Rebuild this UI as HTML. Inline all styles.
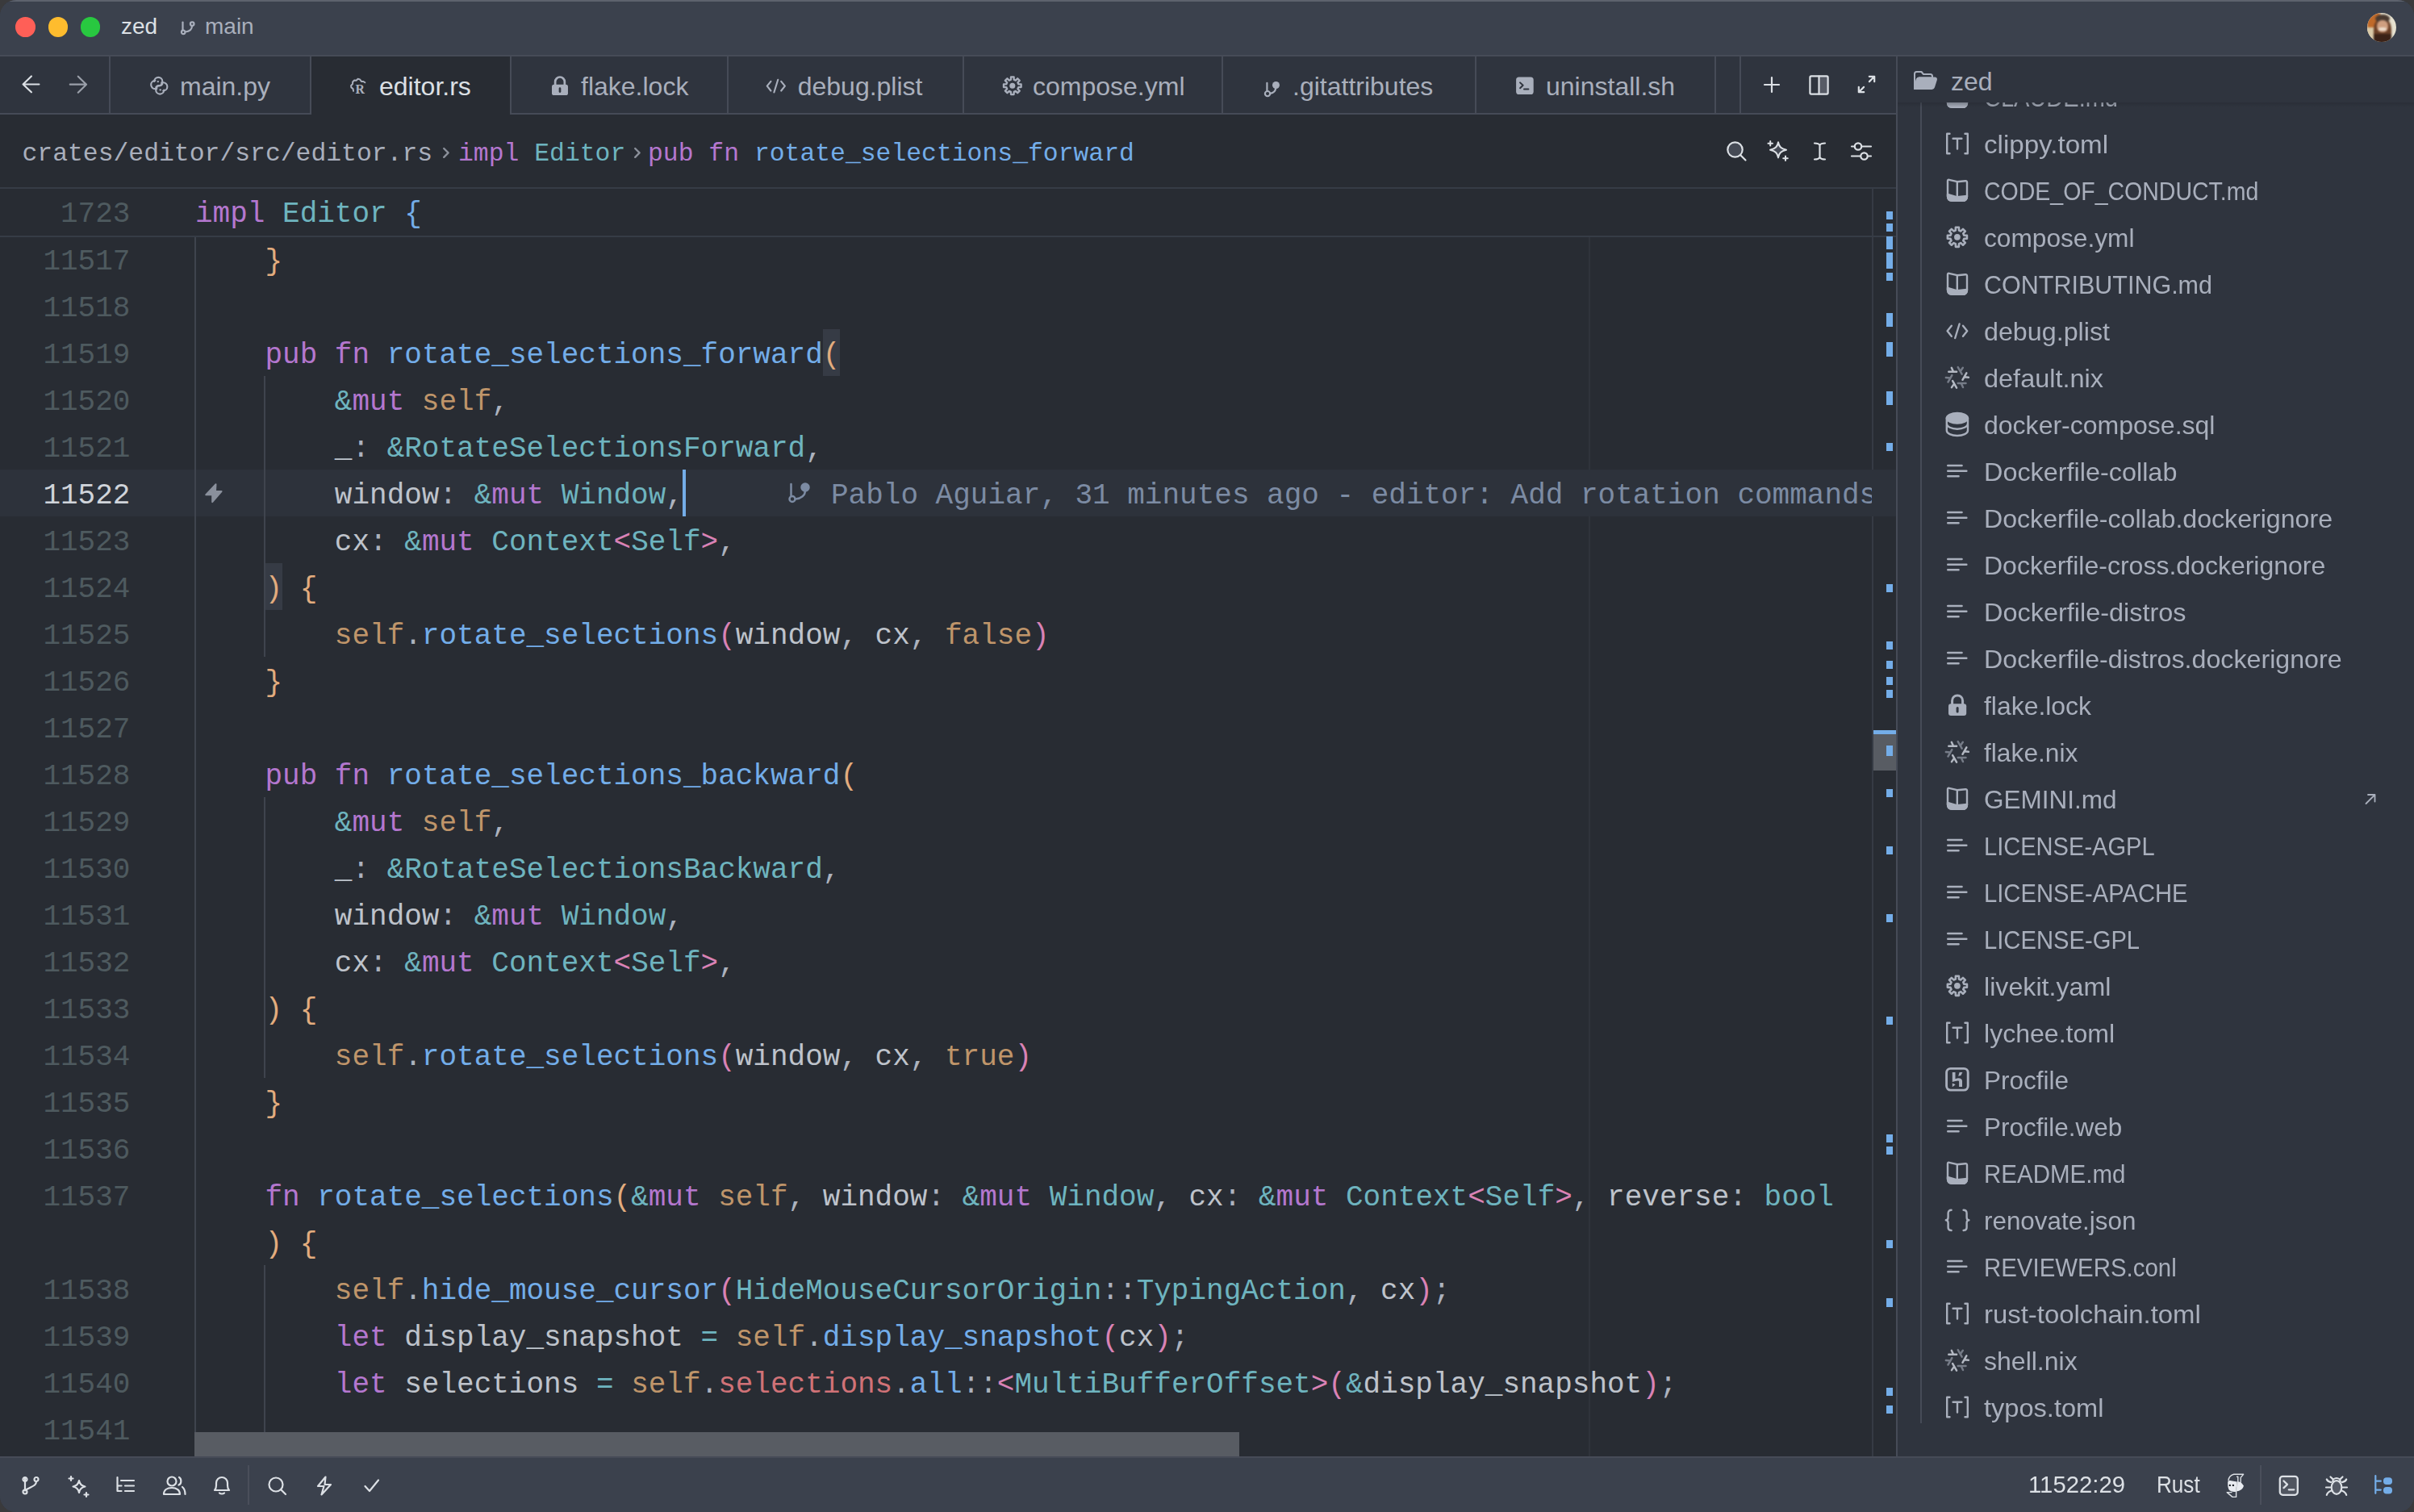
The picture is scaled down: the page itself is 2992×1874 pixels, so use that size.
<!DOCTYPE html><html><head><meta charset="utf-8"><style>
*{margin:0;padding:0;box-sizing:border-box}
html,body{width:2992px;height:1874px;overflow:hidden;background:#3a3a3c}
#win{position:absolute;left:0;top:0;width:2992px;height:1874px;border-radius:20px;overflow:hidden;background:#3b414d}
.a{position:absolute}
.ui{font-family:"Liberation Sans",sans-serif;white-space:pre}
.mono{font-family:"Liberation Mono",monospace;white-space:pre}
.code{font-family:"Liberation Mono",monospace;font-size:36px;line-height:58px;height:58px;white-space:pre;color:#bec3cb}
.k{color:#b477cf} .f{color:#73ade9} .t{color:#6eb4bf} .s{color:#bf956a} .p{color:#acb2be}
.v{color:#bec3cb} .r{color:#d07277} .o{color:#6eb4bf} .b0{color:#74ade8} .b1{color:#e2ac7e} .b2{color:#d982b5}
svg{position:absolute;overflow:visible}
</style></head><body><div id="win">
<div class="a" style="left:0px;top:0px;width:2992px;height:70px;background:#3b414d;"></div>
<div class="a" style="left:0px;top:0px;width:2992px;height:2px;background:#5d626d;"></div>
<div class="a" style="left:19.4px;top:21.4px;width:24.6px;height:24.6px;border-radius:50%;background:#ff5f57"></div>
<div class="a" style="left:59.5px;top:21.4px;width:24.6px;height:24.6px;border-radius:50%;background:#febc2e"></div>
<div class="a" style="left:99.7px;top:21.4px;width:24.6px;height:24.6px;border-radius:50%;background:#28c840"></div>
<div class="a ui" style="left:150px;top:16.30px;font-size:28px;line-height:34px;color:#dce0e5;">zed</div>
<svg style="left:224px;top:26px;width:18px;height:18px;stroke-width:2.2" viewBox="0 0 18 18" fill="none" stroke="#a9afbc" stroke-width="2" stroke-linecap="round" stroke-linejoin="round"><path d="M2.5 1.5v10.5"/><circle cx="3.2" cy="13.8" r="2.3"/><circle cx="14.2" cy="3.6" r="2.3"/><path d="M14 6c0 4-3 7-8.5 7.5"/></svg>
<div class="a ui" style="left:254px;top:16.30px;font-size:28px;line-height:34px;color:#a9afbc;">main</div>
<div class="a" style="left:2933.8px;top:15.6px;width:36.4px;height:36.4px;border-radius:50%;overflow:hidden;background:#e6e1cf"><div class="a" style="left:0;top:0;width:36.4px;height:36.4px;filter:blur(1.2px)"><div class="a" style="left:0;top:0;width:16px;height:20px;background:#c06a2a"></div><div class="a" style="left:-2px;top:18px;width:12px;height:16px;background:#d9c9a8"></div><div class="a" style="left:8px;top:6px;width:22px;height:34px;border-radius:45%;background:#6a3f26"></div><div class="a" style="left:10px;top:2px;width:18px;height:10px;border-radius:50%;background:#4a3a30"></div><div class="a" style="left:12px;top:9px;width:14px;height:15px;border-radius:45%;background:#cf9f80"></div><div class="a" style="left:14px;top:18px;width:10px;height:4px;border-radius:40%;background:#efe0d0"></div><div class="a" style="left:8px;top:26px;width:22px;height:12px;background:#3b2217"></div></div></div>
<div class="a" style="left:0px;top:68px;width:2992px;height:2px;background:#464b57;"></div>
<div class="a" style="left:0px;top:70px;width:2350px;height:72px;background:#2f343e;"></div>
<div class="a" style="left:0px;top:140px;width:2350px;height:2px;background:#464b57;"></div>
<div class="a" style="left:135px;top:70px;width:2px;height:70px;background:#464b57;"></div>
<div class="a" style="left:384px;top:70px;width:2px;height:70px;background:#464b57;"></div>
<div class="a" style="left:632px;top:70px;width:2px;height:70px;background:#464b57;"></div>
<div class="a" style="left:901px;top:70px;width:2px;height:70px;background:#464b57;"></div>
<div class="a" style="left:1193px;top:70px;width:2px;height:70px;background:#464b57;"></div>
<div class="a" style="left:1514px;top:70px;width:2px;height:70px;background:#464b57;"></div>
<div class="a" style="left:1828px;top:70px;width:2px;height:70px;background:#464b57;"></div>
<div class="a" style="left:2125px;top:70px;width:2px;height:70px;background:#464b57;"></div>
<div class="a" style="left:2156px;top:70px;width:2px;height:70px;background:#464b57;"></div>
<div class="a" style="left:386px;top:70px;width:246px;height:72px;background:#282c33;"></div>
<svg style="left:27px;top:93px;width:24px;height:24px;stroke-width:2.2" viewBox="0 0 24 24" fill="none" stroke="#dce0e5" stroke-width="2" stroke-linecap="round" stroke-linejoin="round"><path d="M21.4 11.5H1.6M11.9 1.5L1.6 11.5l10.3 9.8"/></svg>
<svg style="left:86px;top:93px;width:24px;height:24px;stroke-width:2.2" viewBox="0 0 24 24" fill="none" stroke="#9a9fa9" stroke-width="2" stroke-linecap="round" stroke-linejoin="round"><path d="M0.8 11.7H21M10.8 1.7L21 11.7l-10.2 10"/></svg>
<svg style="left:178.19px;top:91.58px;width:36.00px;height:36.00px;color:#a9afbc" viewBox="0 0 40 40" fill="none" stroke="#a9afbc" stroke-width="2.4" stroke-linecap="round" stroke-linejoin="round"><g transform="translate(9.4 3.8)"><path d="M16.5 6.1V8.5Q16.5 11.5 13 11.8H11.5Q8.7 12 8.6 15V16.4H6.5A5.7 5.7 0 0 1 6.5 5H5.3V6.1A5.6 5.6 0 0 1 16.5 6.1Z"/><path transform="rotate(180 12 12)" d="M16.5 6.1V8.5Q16.5 11.5 13 11.8H11.5Q8.7 12 8.6 15V16.4H6.5A5.7 5.7 0 0 1 6.5 5H5.3V6.1A5.6 5.6 0 0 1 16.5 6.1Z"/><circle cx="10.4" cy="6.3" r="1.3" fill="currentColor" stroke="none"/><circle cx="13.6" cy="17.7" r="1.3" fill="currentColor" stroke="none"/></g></svg>
<div class="a ui" style="left:223px;top:88.41px;font-size:32px;line-height:38px;color:#a9afbc;">main.py</div>
<svg style="left:424.59px;top:91.58px;width:36.00px;height:36.00px;color:#a9afbc" viewBox="0 0 40 40" fill="none" stroke="#a9afbc" stroke-width="2.4" stroke-linecap="round" stroke-linejoin="round"><g transform="translate(9.9 4.8)"><path d="M20.5 6.6L18.3 5.2L15.8 5.3L13.4 2.3L10.8 1.6L8.5 3.8L5.8 3.6L3.6 5.8L3.5 8.5L1.3 10.9L1.6 13.4L4 15.2L4.6 18.4" stroke-width="2.2"/><text x="7.2" y="21.7" font-family="Liberation Serif" font-weight="bold" font-size="17.5" fill="currentColor" stroke="none">R</text></g></svg>
<div class="a ui" style="left:470px;top:88.41px;font-size:32px;line-height:38px;color:#dce0e5;">editor.rs</div>
<svg style="left:675.39px;top:91.58px;width:36.00px;height:36.00px;color:#a9afbc" viewBox="0 0 40 40" fill="none" stroke="#a9afbc" stroke-width="2.4" stroke-linecap="round" stroke-linejoin="round"><rect x="10" y="14.2" width="22.2" height="14.8" rx="3" fill="currentColor" stroke="none"/><path d="M14.6 14.5V10.4A6.5 6.5 0 0 1 27.6 10.4V14.5" stroke-width="3"/><path d="M21.1 19.6V24" stroke="#2f343e" stroke-width="3"/></svg>
<div class="a ui" style="left:720px;top:88.41px;font-size:32px;line-height:38px;color:#a9afbc;">flake.lock</div>
<svg style="left:943.39px;top:91.58px;width:36.00px;height:36.00px;color:#a9afbc" viewBox="0 0 40 40" fill="none" stroke="#a9afbc" stroke-width="2.4" stroke-linecap="round" stroke-linejoin="round"><path d="M13.8 9.8L8.6 16.3L13.8 22.8M28 9.8L33.2 16.3L28 22.8M23.6 7.5L18.2 25"/></svg>
<div class="a ui" style="left:988.7px;top:88.41px;font-size:32px;line-height:38px;color:#a9afbc;">debug.plist</div>
<svg style="left:1236.19px;top:91.58px;width:36.00px;height:36.00px;color:#a9afbc" viewBox="0 0 40 40" fill="none" stroke="#a9afbc" stroke-width="2.4" stroke-linecap="round" stroke-linejoin="round"><path d="M18.90 3.77 L22.90 3.77 L22.98 7.46 L25.33 8.43 L27.99 5.87 L30.83 8.71 L28.27 11.37 L29.24 13.72 L32.93 13.80 L32.93 17.80 L29.24 17.88 L28.27 20.23 L30.83 22.89 L27.99 25.73 L25.33 23.17 L22.98 24.14 L22.90 27.83 L18.90 27.83 L18.82 24.14 L16.47 23.17 L13.81 25.73 L10.97 22.89 L13.53 20.23 L12.56 17.88 L8.87 17.80 L8.87 13.80 L12.56 13.72 L13.53 11.37 L10.97 8.71 L13.81 5.87 L16.47 8.43 L18.82 7.46Z" stroke-width="2.6"/><circle cx="20.9" cy="15.8" r="3.9" fill="currentColor" stroke="none"/></svg>
<div class="a ui" style="left:1280px;top:88.41px;font-size:32px;line-height:38px;color:#a9afbc;">compose.yml</div>
<svg style="left:1556.69px;top:91.58px;width:36.00px;height:36.00px;color:#a9afbc" viewBox="0 0 40 40" fill="none" stroke="#a9afbc" stroke-width="2.4" stroke-linecap="round" stroke-linejoin="round"><path d="M14.9 12V22.6"/><circle cx="15.6" cy="26.8" r="3.5"/><circle cx="27.2" cy="15" r="5" fill="currentColor" stroke="none"/><path d="M27 18.5Q26.5 25.5 19.3 26.6"/></svg>
<div class="a ui" style="left:1602px;top:88.41px;font-size:32px;line-height:38px;color:#a9afbc;">.gitattributes</div>
<svg style="left:1871.19px;top:91.58px;width:36.00px;height:36.00px;color:#a9afbc" viewBox="0 0 40 40" fill="none" stroke="#a9afbc" stroke-width="2.4" stroke-linecap="round" stroke-linejoin="round"><rect x="9" y="3.8" width="24" height="24" rx="4" fill="currentColor" stroke="none"/><path d="M14.5 11.5L18.5 15.3L14.5 19.1M20 20.6H26" stroke="#2f343e" stroke-width="2.2"/></svg>
<div class="a ui" style="left:1916px;top:88.41px;font-size:32px;line-height:38px;color:#a9afbc;">uninstall.sh</div>
<svg style="left:2185px;top:94px;width:22px;height:22px;stroke-width:2.2" viewBox="0 0 22 22" fill="none" stroke="#dce0e5" stroke-width="2" stroke-linecap="round" stroke-linejoin="round"><path d="M11 2v18M2 11h18"/></svg>
<svg style="left:2242px;top:93px;width:25px;height:25px;stroke-width:2.2" viewBox="0 0 25 25" fill="none" stroke="#dce0e5" stroke-width="2" stroke-linecap="round" stroke-linejoin="round"><rect x="12.5" y="2" width="10.5" height="21" fill="#575b66" stroke="none"/><rect x="1.4" y="1.4" width="22.2" height="22.2" rx="1.5"/><path d="M12.5 1.5v22"/></svg>
<svg style="left:2302px;top:93px;width:23px;height:23px;stroke-width:2.2" viewBox="0 0 23 23" fill="none" stroke="#dce0e5" stroke-width="2" stroke-linecap="round" stroke-linejoin="round"><path d="M14.8 1.8h6.4v6.4M21.2 1.8l-6.3 6.3M8.2 21.2H1.8v-6.4M1.8 21.2l6.3-6.3"/></svg>
<div class="a" style="left:0px;top:142px;width:2350px;height:1663px;background:#282c33;"></div>
<div class="a mono" style="left:27.5px;top:171.84px;font-size:31.4px;line-height:38px;color:#a9afbc"><span class="p0">crates/editor/src/editor.rs</span></div>
<svg style="left:548px;top:182px;width:10px;height:15px;stroke-width:2.4" viewBox="0 0 10 15" fill="none" stroke="#8b909a" stroke-width="2" stroke-linecap="round" stroke-linejoin="round"><path d="M2.2 2l5.4 5.4-5.4 5.4"/></svg>
<div class="a mono" style="left:568px;top:171.84px;font-size:31.4px;line-height:38px;color:#a9afbc"><span class="k">impl</span><span class="p0"> </span><span class="t">Editor</span></div>
<svg style="left:785px;top:182px;width:10px;height:15px;stroke-width:2.4" viewBox="0 0 10 15" fill="none" stroke="#8b909a" stroke-width="2" stroke-linecap="round" stroke-linejoin="round"><path d="M2.2 2l5.4 5.4-5.4 5.4"/></svg>
<div class="a mono" style="left:803px;top:171.84px;font-size:31.4px;line-height:38px;color:#a9afbc"><span class="k">pub</span><span class="p0"> </span><span class="k">fn</span><span class="p0"> </span><span class="f">rotate_selections_forward</span></div>
<svg style="left:2140px;top:175px;width:26px;height:26px;stroke-width:2.2" viewBox="0 0 26 26" fill="none" stroke="#dce0e5" stroke-width="2" stroke-linecap="round" stroke-linejoin="round"><circle cx="10.5" cy="10.5" r="9.2" fill="#454a55"/><path d="M17 17l6.5 6.5"/></svg>
<svg style="left:2192px;top:174px;width:25px;height:25px;stroke-width:2" viewBox="0 0 25 25" fill="none" stroke="#dce0e5" stroke-width="2" stroke-linecap="round" stroke-linejoin="round"><path d="M12 2.2c1.1 5.6 3.3 8.1 10 9.6-6.7 1.5-8.9 4-10 9.6-1.1-5.6-3.3-8.1-10-9.6 6.7-1.5 8.9-4 10-9.6z" fill="#454a55"/><path d="M2.2 1v5.5M-.55 3.75h5.5M21 19.5v5.5M18.25 22.25h5.5"/></svg>
<svg style="left:2248px;top:176px;width:15px;height:23px;stroke-width:2.2" viewBox="0 0 15 23" fill="none" stroke="#dce0e5" stroke-width="2" stroke-linecap="round" stroke-linejoin="round"><path d="M1 1.5c3 0 5.5 .5 6.5 2.5 1-2 3.5-2.5 6.5-2.5M1 21.5c3 0 5.5-.5 6.5-2.5 1 2 3.5 2.5 6.5 2.5M7.5 4v15"/></svg>
<svg style="left:2294px;top:176px;width:26px;height:23px;stroke-width:2.2" viewBox="0 0 26 23" fill="none" stroke="#dce0e5" stroke-width="2" stroke-linecap="round" stroke-linejoin="round"><path d="M1 5.5h24M1 17.5h24"/><circle cx="9" cy="5.5" r="4.2" fill="#282c33"/><circle cx="16.5" cy="17.5" r="4.2" fill="#282c33"/></svg>
<div class="a" style="left:0px;top:232px;width:2350px;height:2px;background:#363c46;"></div>
<div class="a" style="left:1969px;top:234px;width:2px;height:1571px;background:#2f333b;"></div>
<div class="a" style="left:2320px;top:234px;width:2px;height:1571px;background:#363b44;"></div>
<div class="a" style="left:2350px;top:70px;width:2px;height:1735px;background:#464b57;"></div>
<div class="a" style="left:0px;top:582px;width:2350px;height:58px;background:#2d323b;"></div>
<div class="a" style="left:1019.6px;top:408px;width:21.6px;height:58px;background:#363b45;"></div>
<div class="a" style="left:328.4px;top:698px;width:21.6px;height:58px;background:#363b45;"></div>
<div class="a" style="left:241px;top:294px;width:2px;height:1481px;background:#3f444e;"></div>
<div class="a" style="left:327px;top:466px;width:2px;height:348px;background:#3f444e;"></div>
<div class="a" style="left:327px;top:988px;width:2px;height:348px;background:#3f444e;"></div>
<div class="a" style="left:327px;top:1568px;width:2px;height:207px;background:#3f444e;"></div>
<div class="a code" style="left:53.40px;top:296.40px;color:#4e5a5f">11517</div>
<div class="a code" style="left:242px;top:296.40px;">    <span class="b1">}</span></div>
<div class="a code" style="left:53.40px;top:354.40px;color:#4e5a5f">11518</div>
<div class="a code" style="left:53.40px;top:412.40px;color:#4e5a5f">11519</div>
<div class="a code" style="left:242px;top:412.40px;">    <span class="k">pub</span> <span class="k">fn</span> <span class="f">rotate_selections_forward</span><span class="b1">(</span></div>
<div class="a code" style="left:53.40px;top:470.40px;color:#4e5a5f">11520</div>
<div class="a code" style="left:242px;top:470.40px;">        <span class="o">&amp;</span><span class="k">mut</span> <span class="s">self</span><span class="p">,</span></div>
<div class="a code" style="left:53.40px;top:528.40px;color:#4e5a5f">11521</div>
<div class="a code" style="left:242px;top:528.40px;">        <span class="v">_</span><span class="p">:</span> <span class="o">&amp;</span><span class="t">RotateSelectionsForward</span><span class="p">,</span></div>
<div class="a code" style="left:53.40px;top:586.40px;color:#d0d4da">11522</div>
<div class="a code" style="left:242px;top:586.40px;">        <span class="v">window</span><span class="p">:</span> <span class="o">&amp;</span><span class="k">mut</span> <span class="t">Window</span><span class="p">,</span></div>
<div class="a code" style="left:53.40px;top:644.40px;color:#4e5a5f">11523</div>
<div class="a code" style="left:242px;top:644.40px;">        <span class="v">cx</span><span class="p">:</span> <span class="o">&amp;</span><span class="k">mut</span> <span class="t">Context</span><span class="b2">&lt;</span><span class="t">Self</span><span class="b2">&gt;</span><span class="p">,</span></div>
<div class="a code" style="left:53.40px;top:702.40px;color:#4e5a5f">11524</div>
<div class="a code" style="left:242px;top:702.40px;">    <span class="b1">)</span> <span class="b1">{</span></div>
<div class="a code" style="left:53.40px;top:760.40px;color:#4e5a5f">11525</div>
<div class="a code" style="left:242px;top:760.40px;">        <span class="s">self</span><span class="p">.</span><span class="f">rotate_selections</span><span class="b2">(</span><span class="v">window</span><span class="p">,</span> <span class="v">cx</span><span class="p">,</span> <span class="s">false</span><span class="b2">)</span></div>
<div class="a code" style="left:53.40px;top:818.40px;color:#4e5a5f">11526</div>
<div class="a code" style="left:242px;top:818.40px;">    <span class="b1">}</span></div>
<div class="a code" style="left:53.40px;top:876.40px;color:#4e5a5f">11527</div>
<div class="a code" style="left:53.40px;top:934.40px;color:#4e5a5f">11528</div>
<div class="a code" style="left:242px;top:934.40px;">    <span class="k">pub</span> <span class="k">fn</span> <span class="f">rotate_selections_backward</span><span class="b1">(</span></div>
<div class="a code" style="left:53.40px;top:992.40px;color:#4e5a5f">11529</div>
<div class="a code" style="left:242px;top:992.40px;">        <span class="o">&amp;</span><span class="k">mut</span> <span class="s">self</span><span class="p">,</span></div>
<div class="a code" style="left:53.40px;top:1050.40px;color:#4e5a5f">11530</div>
<div class="a code" style="left:242px;top:1050.40px;">        <span class="v">_</span><span class="p">:</span> <span class="o">&amp;</span><span class="t">RotateSelectionsBackward</span><span class="p">,</span></div>
<div class="a code" style="left:53.40px;top:1108.40px;color:#4e5a5f">11531</div>
<div class="a code" style="left:242px;top:1108.40px;">        <span class="v">window</span><span class="p">:</span> <span class="o">&amp;</span><span class="k">mut</span> <span class="t">Window</span><span class="p">,</span></div>
<div class="a code" style="left:53.40px;top:1166.40px;color:#4e5a5f">11532</div>
<div class="a code" style="left:242px;top:1166.40px;">        <span class="v">cx</span><span class="p">:</span> <span class="o">&amp;</span><span class="k">mut</span> <span class="t">Context</span><span class="b2">&lt;</span><span class="t">Self</span><span class="b2">&gt;</span><span class="p">,</span></div>
<div class="a code" style="left:53.40px;top:1224.40px;color:#4e5a5f">11533</div>
<div class="a code" style="left:242px;top:1224.40px;">    <span class="b1">)</span> <span class="b1">{</span></div>
<div class="a code" style="left:53.40px;top:1282.40px;color:#4e5a5f">11534</div>
<div class="a code" style="left:242px;top:1282.40px;">        <span class="s">self</span><span class="p">.</span><span class="f">rotate_selections</span><span class="b2">(</span><span class="v">window</span><span class="p">,</span> <span class="v">cx</span><span class="p">,</span> <span class="s">true</span><span class="b2">)</span></div>
<div class="a code" style="left:53.40px;top:1340.40px;color:#4e5a5f">11535</div>
<div class="a code" style="left:242px;top:1340.40px;">    <span class="b1">}</span></div>
<div class="a code" style="left:53.40px;top:1398.40px;color:#4e5a5f">11536</div>
<div class="a code" style="left:53.40px;top:1456.40px;color:#4e5a5f">11537</div>
<div class="a code" style="left:242px;top:1456.40px;">    <span class="k">fn</span> <span class="f">rotate_selections</span><span class="b1">(</span><span class="o">&amp;</span><span class="k">mut</span> <span class="s">self</span><span class="p">,</span> <span class="v">window</span><span class="p">:</span> <span class="o">&amp;</span><span class="k">mut</span> <span class="t">Window</span><span class="p">,</span> <span class="v">cx</span><span class="p">:</span> <span class="o">&amp;</span><span class="k">mut</span> <span class="t">Context</span><span class="b2">&lt;</span><span class="t">Self</span><span class="b2">&gt;</span><span class="p">,</span> <span class="v">reverse</span><span class="p">:</span> <span class="t">bool</span></div>
<div class="a code" style="left:242px;top:1514.40px;">    <span class="b1">)</span> <span class="b1">{</span></div>
<div class="a code" style="left:53.40px;top:1572.40px;color:#4e5a5f">11538</div>
<div class="a code" style="left:242px;top:1572.40px;">        <span class="s">self</span><span class="p">.</span><span class="f">hide_mouse_cursor</span><span class="b2">(</span><span class="t">HideMouseCursorOrigin</span><span class="p">::</span><span class="t">TypingAction</span><span class="p">,</span> <span class="v">cx</span><span class="b2">)</span><span class="p">;</span></div>
<div class="a code" style="left:53.40px;top:1630.40px;color:#4e5a5f">11539</div>
<div class="a code" style="left:242px;top:1630.40px;">        <span class="k">let</span> <span class="v">display_snapshot</span> <span class="o">=</span> <span class="s">self</span><span class="p">.</span><span class="f">display_snapshot</span><span class="b2">(</span><span class="v">cx</span><span class="b2">)</span><span class="p">;</span></div>
<div class="a code" style="left:53.40px;top:1688.40px;color:#4e5a5f">11540</div>
<div class="a code" style="left:242px;top:1688.40px;">        <span class="k">let</span> <span class="v">selections</span> <span class="o">=</span> <span class="s">self</span><span class="p">.</span><span class="r">selections</span><span class="p">.</span><span class="f">all</span><span class="p">::</span><span class="b2">&lt;</span><span class="t">MultiBufferOffset</span><span class="b2">&gt;</span><span class="b2">(</span><span class="o">&amp;</span><span class="v">display_snapshot</span><span class="b2">)</span><span class="p">;</span></div>
<div class="a code" style="left:53.40px;top:1746.40px;color:#4e5a5f">11541</div>
<div class="a" style="left:846px;top:582px;width:4px;height:58px;background:#74ade8;"></div>
<svg style="left:0;top:0;width:2992px;height:1874px;pointer-events:none" viewBox="0 0 2992 1874"><path d="M267.5 600.3L255.3 613.2H263.2V622.2L274.5 609H267Z" fill="#8a909c" stroke="#8a909c" stroke-width="2" stroke-linejoin="round"/></svg>
<svg style="left:976px;top:597px;width:29px;height:29px;stroke-width:2.5" viewBox="0 0 29 29" fill="none" stroke="#7c8ba3" stroke-width="2" stroke-linecap="round" stroke-linejoin="round"><path d="M4.5 3v14"/><circle cx="6" cy="21.5" r="3.5"/><circle cx="22" cy="7" r="4.5" fill="#7c8ba3"/><path d="M22 11c0 6-5 10-12 10.5"/></svg>
<div class="a" style="left:1030px;top:582px;width:1290px;height:58px;overflow:hidden"><div class="a code" style="left:0;top:4.4px;color:#7c8ba3">Pablo Aguiar, 31 minutes ago - editor: Add rotation commands</div></div>
<div class="a" style="left:0px;top:234px;width:2350px;height:58px;background:#282c33;"></div>
<div class="a code" style="left:75.00px;top:237.40px;color:#4e5a5f">1723</div>
<div class="a code" style="left:242px;top:237.40px;"><span class="k">impl</span> <span class="t">Editor</span> <span class="b0">{</span></div>
<div class="a" style="left:0px;top:292px;width:2350px;height:2px;background:#363c46;"></div>
<div class="a" style="left:2320px;top:234px;width:2px;height:58px;background:#363b44;"></div>
<div class="a" style="left:241px;top:1775px;width:1295px;height:30px;background:#585c63;"></div>
<div class="a" style="left:2322px;top:905px;width:28px;height:50px;background:#585c63;"></div>
<div class="a" style="left:2322px;top:905px;width:28px;height:5px;background:#74ade8;"></div>
<div class="a" style="left:2338px;top:262px;width:8px;height:10px;background:#74ade8;"></div>
<div class="a" style="left:2338px;top:277px;width:8px;height:10px;background:#74ade8;"></div>
<div class="a" style="left:2338px;top:293px;width:8px;height:16px;background:#74ade8;"></div>
<div class="a" style="left:2338px;top:313px;width:8px;height:20px;background:#74ade8;"></div>
<div class="a" style="left:2338px;top:338px;width:8px;height:10px;background:#74ade8;"></div>
<div class="a" style="left:2338px;top:388px;width:8px;height:17px;background:#74ade8;"></div>
<div class="a" style="left:2338px;top:424px;width:8px;height:18px;background:#74ade8;"></div>
<div class="a" style="left:2338px;top:485px;width:8px;height:17px;background:#74ade8;"></div>
<div class="a" style="left:2338px;top:549px;width:8px;height:10px;background:#74ade8;"></div>
<div class="a" style="left:2338px;top:724px;width:8px;height:10px;background:#74ade8;"></div>
<div class="a" style="left:2338px;top:795px;width:8px;height:10px;background:#74ade8;"></div>
<div class="a" style="left:2338px;top:819px;width:8px;height:10px;background:#74ade8;"></div>
<div class="a" style="left:2338px;top:839px;width:8px;height:10px;background:#74ade8;"></div>
<div class="a" style="left:2338px;top:855px;width:8px;height:10px;background:#74ade8;"></div>
<div class="a" style="left:2338px;top:924px;width:8px;height:13px;background:#74ade8;"></div>
<div class="a" style="left:2338px;top:978px;width:8px;height:10px;background:#74ade8;"></div>
<div class="a" style="left:2338px;top:1049px;width:8px;height:10px;background:#74ade8;"></div>
<div class="a" style="left:2338px;top:1133px;width:8px;height:10px;background:#74ade8;"></div>
<div class="a" style="left:2338px;top:1260px;width:8px;height:10px;background:#74ade8;"></div>
<div class="a" style="left:2338px;top:1406px;width:8px;height:10px;background:#74ade8;"></div>
<div class="a" style="left:2338px;top:1421px;width:8px;height:10px;background:#74ade8;"></div>
<div class="a" style="left:2338px;top:1537px;width:8px;height:10px;background:#74ade8;"></div>
<div class="a" style="left:2338px;top:1609px;width:8px;height:11px;background:#74ade8;"></div>
<div class="a" style="left:2338px;top:1720px;width:8px;height:10px;background:#74ade8;"></div>
<div class="a" style="left:2338px;top:1742px;width:8px;height:10px;background:#74ade8;"></div>
<div class="a" style="left:2352px;top:70px;width:640px;height:1735px;background:#2f343e;"></div>
<div class="a" style="left:2352px;top:127px;width:640px;height:1678px;overflow:hidden">
<svg style="left:53.00px;top:-23.20px;width:40.00px;height:40.00px;color:#a9afbc" viewBox="0 0 40 40" fill="none" stroke="#a9afbc" stroke-width="2.4" stroke-linecap="round" stroke-linejoin="round"><path d="M9 4.2Q9 2.4 10.8 2.8L20.8 5.2L31 4.3Q33 4.1 33 6V23.2Q33 28.8 27.4 28.8H14.6Q9 28.8 9 23.2Z"/><path d="M20.8 5.2V24.3"/><path d="M9 20.8L20.8 24.3L33 23V23.2Q33 28.8 27.4 28.8H14.6Q9 28.8 9 23.2Z" fill="currentColor"/></svg>
<div class="a ui" style="left:107px;top:-25.09px;font-size:32px;line-height:38px;color:#a9afbc;transform:scaleX(0.9063);transform-origin:0 0;">CLAUDE.md</div>
<svg style="left:53.00px;top:34.80px;width:40.00px;height:40.00px;color:#a9afbc" viewBox="0 0 40 40" fill="none" stroke="#a9afbc" stroke-width="2.4" stroke-linecap="round" stroke-linejoin="round"><path d="M11.5 3.8H8.2V28.2H11.5M30.5 3.8H33.8V28.2H30.5M15.6 9.8H26.4M21 9.8V22.5"/></svg>
<div class="a ui" style="left:107px;top:32.91px;font-size:32px;line-height:38px;color:#a9afbc;transform:scaleX(1.0351);transform-origin:0 0;">clippy.toml</div>
<svg style="left:53.00px;top:92.80px;width:40.00px;height:40.00px;color:#a9afbc" viewBox="0 0 40 40" fill="none" stroke="#a9afbc" stroke-width="2.4" stroke-linecap="round" stroke-linejoin="round"><path d="M9 4.2Q9 2.4 10.8 2.8L20.8 5.2L31 4.3Q33 4.1 33 6V23.2Q33 28.8 27.4 28.8H14.6Q9 28.8 9 23.2Z"/><path d="M20.8 5.2V24.3"/><path d="M9 20.8L20.8 24.3L33 23V23.2Q33 28.8 27.4 28.8H14.6Q9 28.8 9 23.2Z" fill="currentColor"/></svg>
<div class="a ui" style="left:107px;top:90.91px;font-size:32px;line-height:38px;color:#a9afbc;transform:scaleX(0.8902);transform-origin:0 0;">CODE_OF_CONDUCT.md</div>
<svg style="left:53.00px;top:150.80px;width:40.00px;height:40.00px;color:#a9afbc" viewBox="0 0 40 40" fill="none" stroke="#a9afbc" stroke-width="2.4" stroke-linecap="round" stroke-linejoin="round"><path d="M18.90 3.77 L22.90 3.77 L22.98 7.46 L25.33 8.43 L27.99 5.87 L30.83 8.71 L28.27 11.37 L29.24 13.72 L32.93 13.80 L32.93 17.80 L29.24 17.88 L28.27 20.23 L30.83 22.89 L27.99 25.73 L25.33 23.17 L22.98 24.14 L22.90 27.83 L18.90 27.83 L18.82 24.14 L16.47 23.17 L13.81 25.73 L10.97 22.89 L13.53 20.23 L12.56 17.88 L8.87 17.80 L8.87 13.80 L12.56 13.72 L13.53 11.37 L10.97 8.71 L13.81 5.87 L16.47 8.43 L18.82 7.46Z" stroke-width="2.6"/><circle cx="20.9" cy="15.8" r="3.9" fill="currentColor" stroke="none"/></svg>
<div class="a ui" style="left:107px;top:148.91px;font-size:32px;line-height:38px;color:#a9afbc;transform:scaleX(0.9889);transform-origin:0 0;">compose.yml</div>
<svg style="left:53.00px;top:208.80px;width:40.00px;height:40.00px;color:#a9afbc" viewBox="0 0 40 40" fill="none" stroke="#a9afbc" stroke-width="2.4" stroke-linecap="round" stroke-linejoin="round"><path d="M9 4.2Q9 2.4 10.8 2.8L20.8 5.2L31 4.3Q33 4.1 33 6V23.2Q33 28.8 27.4 28.8H14.6Q9 28.8 9 23.2Z"/><path d="M20.8 5.2V24.3"/><path d="M9 20.8L20.8 24.3L33 23V23.2Q33 28.8 27.4 28.8H14.6Q9 28.8 9 23.2Z" fill="currentColor"/></svg>
<div class="a ui" style="left:107px;top:206.91px;font-size:32px;line-height:38px;color:#a9afbc;transform:scaleX(0.9532);transform-origin:0 0;">CONTRIBUTING.md</div>
<svg style="left:53.00px;top:266.80px;width:40.00px;height:40.00px;color:#a9afbc" viewBox="0 0 40 40" fill="none" stroke="#a9afbc" stroke-width="2.4" stroke-linecap="round" stroke-linejoin="round"><path d="M13.8 9.8L8.6 16.3L13.8 22.8M28 9.8L33.2 16.3L28 22.8M23.6 7.5L18.2 25"/></svg>
<div class="a ui" style="left:107px;top:264.91px;font-size:32px;line-height:38px;color:#a9afbc;transform:scaleX(1.0079);transform-origin:0 0;">debug.plist</div>
<svg style="left:53.00px;top:324.80px;width:40.00px;height:40.00px;color:#a9afbc" viewBox="0 0 40 40" fill="none" stroke="#a9afbc" stroke-width="2.4" stroke-linecap="round" stroke-linejoin="round"><path d="M10.30 8.80L20.10 8.80M13.80 3.80L16.00 8.50" stroke="#b3b8c2" stroke-width="2.5"/><path d="M21.75 3.17L26.65 11.66M27.83 3.70L24.86 7.96" stroke="#767c88" stroke-width="2.5"/><path d="M32.35 10.27L27.45 18.76M34.93 15.80L29.76 15.36" stroke="#b3b8c2" stroke-width="2.5"/><path d="M31.50 23.00L21.70 23.00M28.00 28.00L25.80 23.30" stroke="#767c88" stroke-width="2.5"/><path d="M20.05 28.63L15.15 20.14M13.97 28.10L16.94 23.84" stroke="#b3b8c2" stroke-width="2.5"/><path d="M9.45 21.53L14.35 13.04M6.87 16.00L12.04 16.44" stroke="#767c88" stroke-width="2.5"/></svg>
<div class="a ui" style="left:107px;top:322.91px;font-size:32px;line-height:38px;color:#a9afbc;transform:scaleX(1.0146);transform-origin:0 0;">default.nix</div>
<svg style="left:53.00px;top:382.80px;width:40.00px;height:40.00px;color:#a9afbc" viewBox="0 0 40 40" fill="none" stroke="#a9afbc" stroke-width="2.4" stroke-linecap="round" stroke-linejoin="round"><ellipse cx="20.9" cy="8.2" rx="13.1" ry="6.3" fill="currentColor"/><path d="M7.8 8.2V23.4A13.1 6.6 0 0 0 34 23.4V8.2M7.8 15.1A13.1 6.6 0 0 0 34 15.1"/></svg>
<div class="a ui" style="left:107px;top:380.91px;font-size:32px;line-height:38px;color:#a9afbc;transform:scaleX(1.0005);transform-origin:0 0;">docker-compose.sql</div>
<svg style="left:53.00px;top:440.80px;width:40.00px;height:40.00px;color:#a9afbc" viewBox="0 0 40 40" fill="none" stroke="#a9afbc" stroke-width="2.4" stroke-linecap="round" stroke-linejoin="round"><path d="M9.2 9H26.6M9.2 15.7H32.4M9.2 22.3H22.6"/></svg>
<div class="a ui" style="left:107px;top:438.91px;font-size:32px;line-height:38px;color:#a9afbc;transform:scaleX(1.0121);transform-origin:0 0;">Dockerfile-collab</div>
<svg style="left:53.00px;top:498.80px;width:40.00px;height:40.00px;color:#a9afbc" viewBox="0 0 40 40" fill="none" stroke="#a9afbc" stroke-width="2.4" stroke-linecap="round" stroke-linejoin="round"><path d="M9.2 9H26.6M9.2 15.7H32.4M9.2 22.3H22.6"/></svg>
<div class="a ui" style="left:107px;top:496.91px;font-size:32px;line-height:38px;color:#a9afbc;transform:scaleX(1.0037);transform-origin:0 0;">Dockerfile-collab.dockerignore</div>
<svg style="left:53.00px;top:556.80px;width:40.00px;height:40.00px;color:#a9afbc" viewBox="0 0 40 40" fill="none" stroke="#a9afbc" stroke-width="2.4" stroke-linecap="round" stroke-linejoin="round"><path d="M9.2 9H26.6M9.2 15.7H32.4M9.2 22.3H22.6"/></svg>
<div class="a ui" style="left:107px;top:554.91px;font-size:32px;line-height:38px;color:#a9afbc;transform:scaleX(1.0001);transform-origin:0 0;">Dockerfile-cross.dockerignore</div>
<svg style="left:53.00px;top:614.80px;width:40.00px;height:40.00px;color:#a9afbc" viewBox="0 0 40 40" fill="none" stroke="#a9afbc" stroke-width="2.4" stroke-linecap="round" stroke-linejoin="round"><path d="M9.2 9H26.6M9.2 15.7H32.4M9.2 22.3H22.6"/></svg>
<div class="a ui" style="left:107px;top:612.91px;font-size:32px;line-height:38px;color:#a9afbc;transform:scaleX(1.0135);transform-origin:0 0;">Dockerfile-distros</div>
<svg style="left:53.00px;top:672.80px;width:40.00px;height:40.00px;color:#a9afbc" viewBox="0 0 40 40" fill="none" stroke="#a9afbc" stroke-width="2.4" stroke-linecap="round" stroke-linejoin="round"><path d="M9.2 9H26.6M9.2 15.7H32.4M9.2 22.3H22.6"/></svg>
<div class="a ui" style="left:107px;top:670.91px;font-size:32px;line-height:38px;color:#a9afbc;transform:scaleX(1.0058);transform-origin:0 0;">Dockerfile-distros.dockerignore</div>
<svg style="left:53.00px;top:730.80px;width:40.00px;height:40.00px;color:#a9afbc" viewBox="0 0 40 40" fill="none" stroke="#a9afbc" stroke-width="2.4" stroke-linecap="round" stroke-linejoin="round"><rect x="10" y="14.2" width="22.2" height="14.8" rx="3" fill="currentColor" stroke="none"/><path d="M14.6 14.5V10.4A6.5 6.5 0 0 1 27.6 10.4V14.5" stroke-width="3"/><path d="M21.1 19.6V24" stroke="#2f343e" stroke-width="3"/></svg>
<div class="a ui" style="left:107px;top:728.91px;font-size:32px;line-height:38px;color:#a9afbc;transform:scaleX(0.9971);transform-origin:0 0;">flake.lock</div>
<svg style="left:53.00px;top:788.80px;width:40.00px;height:40.00px;color:#a9afbc" viewBox="0 0 40 40" fill="none" stroke="#a9afbc" stroke-width="2.4" stroke-linecap="round" stroke-linejoin="round"><path d="M10.30 8.80L20.10 8.80M13.80 3.80L16.00 8.50" stroke="#b3b8c2" stroke-width="2.5"/><path d="M21.75 3.17L26.65 11.66M27.83 3.70L24.86 7.96" stroke="#767c88" stroke-width="2.5"/><path d="M32.35 10.27L27.45 18.76M34.93 15.80L29.76 15.36" stroke="#b3b8c2" stroke-width="2.5"/><path d="M31.50 23.00L21.70 23.00M28.00 28.00L25.80 23.30" stroke="#767c88" stroke-width="2.5"/><path d="M20.05 28.63L15.15 20.14M13.97 28.10L16.94 23.84" stroke="#b3b8c2" stroke-width="2.5"/><path d="M9.45 21.53L14.35 13.04M6.87 16.00L12.04 16.44" stroke="#767c88" stroke-width="2.5"/></svg>
<div class="a ui" style="left:107px;top:786.91px;font-size:32px;line-height:38px;color:#a9afbc;transform:scaleX(0.9916);transform-origin:0 0;">flake.nix</div>
<svg style="left:53.00px;top:846.80px;width:40.00px;height:40.00px;color:#a9afbc" viewBox="0 0 40 40" fill="none" stroke="#a9afbc" stroke-width="2.4" stroke-linecap="round" stroke-linejoin="round"><path d="M9 4.2Q9 2.4 10.8 2.8L20.8 5.2L31 4.3Q33 4.1 33 6V23.2Q33 28.8 27.4 28.8H14.6Q9 28.8 9 23.2Z"/><path d="M20.8 5.2V24.3"/><path d="M9 20.8L20.8 24.3L33 23V23.2Q33 28.8 27.4 28.8H14.6Q9 28.8 9 23.2Z" fill="currentColor"/></svg>
<div class="a ui" style="left:107px;top:844.91px;font-size:32px;line-height:38px;color:#a9afbc;transform:scaleX(0.9843);transform-origin:0 0;">GEMINI.md</div>
<svg style="left:53.00px;top:904.80px;width:40.00px;height:40.00px;color:#a9afbc" viewBox="0 0 40 40" fill="none" stroke="#a9afbc" stroke-width="2.4" stroke-linecap="round" stroke-linejoin="round"><path d="M9.2 9H26.6M9.2 15.7H32.4M9.2 22.3H22.6"/></svg>
<div class="a ui" style="left:107px;top:902.91px;font-size:32px;line-height:38px;color:#a9afbc;transform:scaleX(0.9083);transform-origin:0 0;">LICENSE-AGPL</div>
<svg style="left:53.00px;top:962.80px;width:40.00px;height:40.00px;color:#a9afbc" viewBox="0 0 40 40" fill="none" stroke="#a9afbc" stroke-width="2.4" stroke-linecap="round" stroke-linejoin="round"><path d="M9.2 9H26.6M9.2 15.7H32.4M9.2 22.3H22.6"/></svg>
<div class="a ui" style="left:107px;top:960.91px;font-size:32px;line-height:38px;color:#a9afbc;transform:scaleX(0.9125);transform-origin:0 0;">LICENSE-APACHE</div>
<svg style="left:53.00px;top:1020.80px;width:40.00px;height:40.00px;color:#a9afbc" viewBox="0 0 40 40" fill="none" stroke="#a9afbc" stroke-width="2.4" stroke-linecap="round" stroke-linejoin="round"><path d="M9.2 9H26.6M9.2 15.7H32.4M9.2 22.3H22.6"/></svg>
<div class="a ui" style="left:107px;top:1018.91px;font-size:32px;line-height:38px;color:#a9afbc;transform:scaleX(0.9125);transform-origin:0 0;">LICENSE-GPL</div>
<svg style="left:53.00px;top:1078.80px;width:40.00px;height:40.00px;color:#a9afbc" viewBox="0 0 40 40" fill="none" stroke="#a9afbc" stroke-width="2.4" stroke-linecap="round" stroke-linejoin="round"><path d="M18.90 3.77 L22.90 3.77 L22.98 7.46 L25.33 8.43 L27.99 5.87 L30.83 8.71 L28.27 11.37 L29.24 13.72 L32.93 13.80 L32.93 17.80 L29.24 17.88 L28.27 20.23 L30.83 22.89 L27.99 25.73 L25.33 23.17 L22.98 24.14 L22.90 27.83 L18.90 27.83 L18.82 24.14 L16.47 23.17 L13.81 25.73 L10.97 22.89 L13.53 20.23 L12.56 17.88 L8.87 17.80 L8.87 13.80 L12.56 13.72 L13.53 11.37 L10.97 8.71 L13.81 5.87 L16.47 8.43 L18.82 7.46Z" stroke-width="2.6"/><circle cx="20.9" cy="15.8" r="3.9" fill="currentColor" stroke="none"/></svg>
<div class="a ui" style="left:107px;top:1076.91px;font-size:32px;line-height:38px;color:#a9afbc;transform:scaleX(1.0060);transform-origin:0 0;">livekit.yaml</div>
<svg style="left:53.00px;top:1136.80px;width:40.00px;height:40.00px;color:#a9afbc" viewBox="0 0 40 40" fill="none" stroke="#a9afbc" stroke-width="2.4" stroke-linecap="round" stroke-linejoin="round"><path d="M11.5 3.8H8.2V28.2H11.5M30.5 3.8H33.8V28.2H30.5M15.6 9.8H26.4M21 9.8V22.5"/></svg>
<div class="a ui" style="left:107px;top:1134.91px;font-size:32px;line-height:38px;color:#a9afbc;transform:scaleX(1.0022);transform-origin:0 0;">lychee.toml</div>
<svg style="left:53.00px;top:1194.80px;width:40.00px;height:40.00px;color:#a9afbc" viewBox="0 0 40 40" fill="none" stroke="#a9afbc" stroke-width="2.4" stroke-linecap="round" stroke-linejoin="round"><rect x="7.6" y="2.4" width="26.6" height="26.7" rx="5" stroke-width="2.9"/><path d="M14.8 7H18.5V15.3Q21 14.1 24 14.4Q27 14.9 27 18.2V25H23.1V18.6Q23.1 17.4 21.5 17.6Q18.8 18 14.8 19.1Z" fill="currentColor" stroke="none"/><path d="M14.8 20.6L18.7 22.3L14.8 25.3Z" fill="currentColor" stroke="none"/><path d="M22.2 11.8L23.6 7H27.4L25.4 10.9Z" fill="currentColor" stroke="none"/></svg>
<div class="a ui" style="left:107px;top:1192.91px;font-size:32px;line-height:38px;color:#a9afbc;transform:scaleX(0.9840);transform-origin:0 0;">Procfile</div>
<svg style="left:53.00px;top:1252.80px;width:40.00px;height:40.00px;color:#a9afbc" viewBox="0 0 40 40" fill="none" stroke="#a9afbc" stroke-width="2.4" stroke-linecap="round" stroke-linejoin="round"><path d="M9.2 9H26.6M9.2 15.7H32.4M9.2 22.3H22.6"/></svg>
<div class="a ui" style="left:107px;top:1250.91px;font-size:32px;line-height:38px;color:#a9afbc;transform:scaleX(0.9822);transform-origin:0 0;">Procfile.web</div>
<svg style="left:53.00px;top:1310.80px;width:40.00px;height:40.00px;color:#a9afbc" viewBox="0 0 40 40" fill="none" stroke="#a9afbc" stroke-width="2.4" stroke-linecap="round" stroke-linejoin="round"><path d="M9 4.2Q9 2.4 10.8 2.8L20.8 5.2L31 4.3Q33 4.1 33 6V23.2Q33 28.8 27.4 28.8H14.6Q9 28.8 9 23.2Z"/><path d="M20.8 5.2V24.3"/><path d="M9 20.8L20.8 24.3L33 23V23.2Q33 28.8 27.4 28.8H14.6Q9 28.8 9 23.2Z" fill="currentColor"/></svg>
<div class="a ui" style="left:107px;top:1308.91px;font-size:32px;line-height:38px;color:#a9afbc;transform:scaleX(0.9219);transform-origin:0 0;">README.md</div>
<svg style="left:53.00px;top:1368.80px;width:40.00px;height:40.00px;color:#a9afbc" viewBox="0 0 40 40" fill="none" stroke="#a9afbc" stroke-width="2.4" stroke-linecap="round" stroke-linejoin="round"><path d="M13.6 3.8Q9.6 3.8 9.6 7.8V12.8Q9.6 16.3 6.8 16.3Q9.6 16.3 9.6 19.8V25Q9.6 29 13.6 29"/><path d="M28.6 3.8Q32.6 3.8 32.6 7.8V12.8Q32.6 16.3 35.4 16.3Q32.6 16.3 32.6 19.8V25Q32.6 29 28.6 29"/></svg>
<div class="a ui" style="left:107px;top:1366.91px;font-size:32px;line-height:38px;color:#a9afbc;transform:scaleX(0.9806);transform-origin:0 0;">renovate.json</div>
<svg style="left:53.00px;top:1426.80px;width:40.00px;height:40.00px;color:#a9afbc" viewBox="0 0 40 40" fill="none" stroke="#a9afbc" stroke-width="2.4" stroke-linecap="round" stroke-linejoin="round"><path d="M9.2 9H26.6M9.2 15.7H32.4M9.2 22.3H22.6"/></svg>
<div class="a ui" style="left:107px;top:1424.91px;font-size:32px;line-height:38px;color:#a9afbc;transform:scaleX(0.9194);transform-origin:0 0;">REVIEWERS.conl</div>
<svg style="left:53.00px;top:1484.80px;width:40.00px;height:40.00px;color:#a9afbc" viewBox="0 0 40 40" fill="none" stroke="#a9afbc" stroke-width="2.4" stroke-linecap="round" stroke-linejoin="round"><path d="M11.5 3.8H8.2V28.2H11.5M30.5 3.8H33.8V28.2H30.5M15.6 9.8H26.4M21 9.8V22.5"/></svg>
<div class="a ui" style="left:107px;top:1482.91px;font-size:32px;line-height:38px;color:#a9afbc;transform:scaleX(1.0282);transform-origin:0 0;">rust-toolchain.toml</div>
<svg style="left:53.00px;top:1542.80px;width:40.00px;height:40.00px;color:#a9afbc" viewBox="0 0 40 40" fill="none" stroke="#a9afbc" stroke-width="2.4" stroke-linecap="round" stroke-linejoin="round"><path d="M10.30 8.80L20.10 8.80M13.80 3.80L16.00 8.50" stroke="#b3b8c2" stroke-width="2.5"/><path d="M21.75 3.17L26.65 11.66M27.83 3.70L24.86 7.96" stroke="#767c88" stroke-width="2.5"/><path d="M32.35 10.27L27.45 18.76M34.93 15.80L29.76 15.36" stroke="#b3b8c2" stroke-width="2.5"/><path d="M31.50 23.00L21.70 23.00M28.00 28.00L25.80 23.30" stroke="#767c88" stroke-width="2.5"/><path d="M20.05 28.63L15.15 20.14M13.97 28.10L16.94 23.84" stroke="#b3b8c2" stroke-width="2.5"/><path d="M9.45 21.53L14.35 13.04M6.87 16.00L12.04 16.44" stroke="#767c88" stroke-width="2.5"/></svg>
<div class="a ui" style="left:107px;top:1540.91px;font-size:32px;line-height:38px;color:#a9afbc;transform:scaleX(1.0008);transform-origin:0 0;">shell.nix</div>
<svg style="left:53.00px;top:1600.80px;width:40.00px;height:40.00px;color:#a9afbc" viewBox="0 0 40 40" fill="none" stroke="#a9afbc" stroke-width="2.4" stroke-linecap="round" stroke-linejoin="round"><path d="M11.5 3.8H8.2V28.2H11.5M30.5 3.8H33.8V28.2H30.5M15.6 9.8H26.4M21 9.8V22.5"/></svg>
<div class="a ui" style="left:107px;top:1598.91px;font-size:32px;line-height:38px;color:#a9afbc;transform:scaleX(1.0176);transform-origin:0 0;">typos.toml</div>
</div>
<div class="a" style="left:2380px;top:127px;width:2px;height:1637px;background:#464b57;"></div>
<svg style="left:2931px;top:984px;width:14px;height:13px;stroke-width:1.8" viewBox="0 0 14 13" fill="none" stroke="#a9afbc" stroke-width="2" stroke-linecap="round" stroke-linejoin="round"><path d="M1.5 12L12.5 1M4 1h8.5v8.5"/></svg>
<div class="a" style="left:2352px;top:70px;width:640px;height:57px;background:#2f343e;"></div>
<div class="a" style="left:2352px;top:127px;width:640px;height:6px;background:linear-gradient(#20242b55,#2f343e00)"></div>
<svg style="left:2371px;top:87px;width:30px;height:25px;color:#a9afbc;stroke-width:2" viewBox="0 0 30 25" fill="none" stroke="#a9afbc" stroke-width="2" stroke-linecap="round" stroke-linejoin="round"><path d="M2 4.5C2 3 3 2 4.5 2h6l2.5 3h8.5C23 5 24 6 24 7.5v2H7.5c-1.5 0-2.3.8-2.8 2L2 23z" fill="none"/><path d="M5 11.5c.4-1.3 1.2-2 2.5-2h19.5c1.5 0 2.3 1 1.9 2.3L26 21c-.4 1.3-1.2 2-2.5 2H2z" fill="currentColor"/></svg>
<div class="a ui" style="left:2418px;top:81.91px;font-size:32px;line-height:38px;color:#a9afbc;">zed</div>
<div class="a" style="left:0px;top:1805px;width:2992px;height:69px;background:#3b414d;"></div>
<div class="a" style="left:0px;top:1805px;width:2992px;height:2px;background:#464b57;"></div>
<svg style="left:27px;top:1830px;width:28px;height:26px;stroke-width:2.2" viewBox="0 0 28 26" fill="none" stroke="#dce0e5" stroke-width="2" stroke-linecap="round" stroke-linejoin="round"><path d="M4 2.5v15"/><circle cx="4" cy="19" r="2.5"/><circle cx="4" cy="3.5" r="2.5"/><circle cx="18" cy="3.5" r="2.5"/><path d="M18 6c0 6-6 6-14 11"/></svg>
<svg style="left:85px;top:1829px;width:28px;height:26px;stroke-width:2.2" viewBox="0 0 28 26" fill="none" stroke="#dce0e5" stroke-width="2" stroke-linecap="round" stroke-linejoin="round"><path d="M13 6c.8 4.6 2.6 6.6 7.5 7.5-4.9.9-6.7 2.9-7.5 7.5-.8-4.6-2.6-6.6-7.5-7.5 4.9-.9 6.7-2.9 7.5-7.5z"/><path d="M3 1v5M.5 3.5h5M22 21v5M19.5 23.5h5"/></svg>
<svg style="left:144px;top:1830px;width:28px;height:26px;stroke-width:2.2" viewBox="0 0 28 26" fill="none" stroke="#dce0e5" stroke-width="2" stroke-linecap="round" stroke-linejoin="round"><path d="M1.5 1v17h5M6 5h16M11 11.5h11M11 18h11M1.5 11.5h5"/></svg>
<svg style="left:202px;top:1829px;width:28px;height:26px;stroke-width:2.2" viewBox="0 0 28 26" fill="none" stroke="#dce0e5" stroke-width="2" stroke-linecap="round" stroke-linejoin="round"><circle cx="11" cy="7" r="5.5"/><path d="M1 23c0-5 4-8 10-8s10 3 10 8z"/><path d="M20 2c3 1.5 3.5 8-.5 9.5M24 14c2.5 2 3.5 5 3.5 9"/></svg>
<svg style="left:263px;top:1829px;width:28px;height:26px;stroke-width:2.2" viewBox="0 0 28 26" fill="none" stroke="#dce0e5" stroke-width="2" stroke-linecap="round" stroke-linejoin="round"><path d="M3 18c1.5-1.5 2-3 2-6V9a7 7 0 0114 0v3c0 3 .5 4.5 2 6z"/><path d="M9 21.5c1.5 1.3 4.5 1.3 6 0"/></svg>
<svg style="left:332px;top:1830px;width:28px;height:26px;stroke-width:2.2" viewBox="0 0 28 26" fill="none" stroke="#dce0e5" stroke-width="2" stroke-linecap="round" stroke-linejoin="round"><circle cx="10" cy="10" r="8.5"/><path d="M16.5 16.5l5.5 5.5"/></svg>
<svg style="left:390px;top:1829px;width:28px;height:26px;stroke-width:2.2" viewBox="0 0 28 26" fill="none" stroke="#dce0e5" stroke-width="2" stroke-linecap="round" stroke-linejoin="round"><path d="M13.5 1.5L4 13h7.5l-3 10.5L20 11h-7.5z"/></svg>
<svg style="left:451px;top:1833px;width:28px;height:26px;stroke-width:2.2" viewBox="0 0 28 26" fill="none" stroke="#dce0e5" stroke-width="2" stroke-linecap="round" stroke-linejoin="round"><path d="M1.5 9l5.5 6L18 1.5"/></svg>
<div class="a" style="left:307px;top:1816px;width:2px;height:49px;background:#4a4f5b;"></div>
<div class="a ui" style="left:2514px;top:1823.45px;font-size:29px;line-height:35px;color:#dce0e5;transform:scaleX(1.0100);transform-origin:0 0;">11522:29</div>
<div class="a ui" style="left:2673px;top:1823.45px;font-size:29px;line-height:35px;color:#dce0e5;transform:scaleX(0.9000);transform-origin:0 0;">Rust</div>
<svg style="left:2750px;top:1820px;width:40px;height:40px" viewBox="0 0 40 40" fill="none" stroke="#dce0e5" stroke-width="1.4" stroke-linecap="round" stroke-linejoin="round"><path d="M11.2 17.5Q11 14.8 14 15Q18 15.5 22.6 16.6L21.2 28.8Q16.5 29.6 13.4 27.2Q10.8 24.6 11.2 17.5Z" fill="#e8ebf0" stroke="none"/><path d="M22.6 16.6Q25.8 16.1 27.4 16.9L31 21.4Q29.6 27.6 21.6 28.6Z" fill="#e8ebf0" stroke="none"/><circle cx="13.8" cy="20.9" r="1.2" fill="#1d2026" stroke="none"/><circle cx="17.9" cy="20.9" r="1.2" fill="#1d2026" stroke="none"/><path d="M12 14.8Q12.6 8.8 18.6 7.2H30.6L27.2 11.4V16.6M22.6 10.2H23.8V16.8L21.6 28.8V35.4H17L10.2 29.6H16"/></svg>
<div class="a" style="left:2801px;top:1816px;width:2px;height:49px;background:#4a4f5b;"></div>
<svg style="left:2820px;top:1825px;width:32px;height:32px;stroke-width:2.3" viewBox="0 0 32 32" fill="none" stroke="#dce0e5" stroke-width="2" stroke-linecap="round" stroke-linejoin="round"><rect x="5.8" y="4.8" width="22" height="23" rx="3.5" fill="#505560"/><path d="M10.5 10.5l4.5 4.3-4.5 4.3M16.8 21.3h6.5"/></svg>
<svg style="left:2880px;top:1825px;width:32px;height:32px;stroke-width:2.2" viewBox="0 0 32 32" fill="none" stroke="#dce0e5" stroke-width="2" stroke-linecap="round" stroke-linejoin="round"><path d="M8.5 5.5l2.8 2.6M23.5 5.5l-2.8 2.6M11.2 11.2a4.8 4.2 0 0 1 9.6 0z" /><ellipse cx="16" cy="18.5" rx="6.3" ry="8.3" fill="#555a66"/><path d="M3.8 8.5q1 2.6 5.3 3.6M28.2 8.5q-1 2.6-5.3 3.6M3 18.5h6M29 18.5h-6M3.8 28q1-3.6 5.3-5.2M28.2 28q-1-3.6-5.3-5.2"/></svg>
<svg style="left:2938px;top:1825px;width:32px;height:32px;stroke-width:2.2" viewBox="0 0 32 32" fill="none" stroke="#74ade8" stroke-width="2" stroke-linecap="round" stroke-linejoin="round"><path d="M6.3 4v21.8M6.3 10.7h6.5M6.3 21.6h6.5" stroke="#74ade8"/><rect x="16" y="6.2" width="11" height="8.8" rx="4" fill="#74ade8" stroke="none"/><rect x="16" y="18" width="11" height="8.4" rx="4" fill="#74ade8" stroke="none"/></svg>
</div></body></html>
